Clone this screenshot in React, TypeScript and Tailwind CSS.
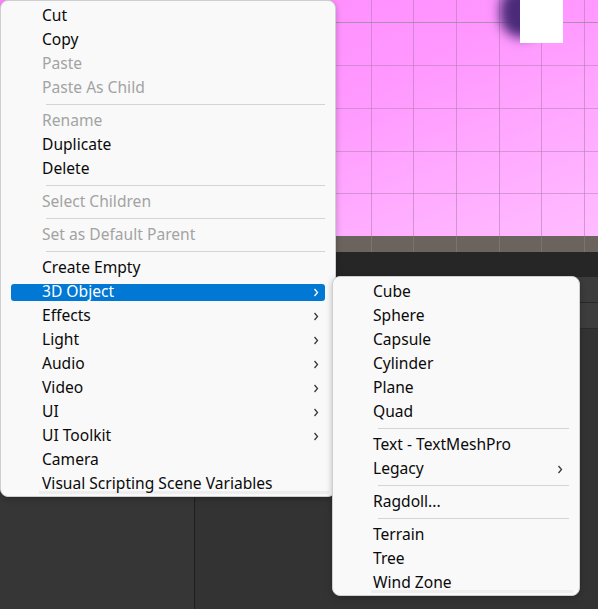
import React from "react";

type Item =
  | { sep: true }
  | { label: string; disabled?: boolean; sub?: boolean; active?: boolean; sep?: false };

const mainItems: Item[] = [
  { label: "Cut" },
  { label: "Copy" },
  { label: "Paste", disabled: true },
  { label: "Paste As Child", disabled: true },
  { sep: true },
  { label: "Rename", disabled: true },
  { label: "Duplicate" },
  { label: "Delete" },
  { sep: true },
  { label: "Select Children", disabled: true },
  { sep: true },
  { label: "Set as Default Parent", disabled: true },
  { sep: true },
  { label: "Create Empty" },
  { label: "3D Object", sub: true, active: true },
  { label: "Effects", sub: true },
  { label: "Light", sub: true },
  { label: "Audio", sub: true },
  { label: "Video", sub: true },
  { label: "UI", sub: true },
  { label: "UI Toolkit", sub: true },
  { label: "Camera" },
  { label: "Visual Scripting Scene Variables" },
];

const subItems: Item[] = [
  { label: "Cube" },
  { label: "Sphere" },
  { label: "Capsule" },
  { label: "Cylinder" },
  { label: "Plane" },
  { label: "Quad" },
  { sep: true },
  { label: "Text - TextMeshPro" },
  { label: "Legacy", sub: true },
  { sep: true },
  { label: "Ragdoll..." },
  { sep: true },
  { label: "Terrain" },
  { label: "Tree" },
  { label: "Wind Zone" },
];

function Chevron({ white }: { white?: boolean }) {
  return (
    <svg width="6" height="9" viewBox="0 0 6 9" className="ml-auto mr-[6px] shrink-0">
      <polyline
        points="1.5,1 4.5,4.5 1.5,8"
        fill="none"
        stroke={white ? "#ffffff" : "#3a3a3a"}
        strokeWidth="1.3"
      />
    </svg>
  );
}

function Menu({ items, textPad }: { items: Item[]; textPad: string }) {
  return (
    <div className="flex flex-col pt-[3px] pb-[2px]">
      {items.map((it, i) =>
        it.sep ? (
          <div key={i} className="h-[9px] pl-[45px] pr-[10px] pt-[4px]">
            <div className="h-px bg-[#d4d4d4]" />
          </div>
        ) : (
          <div key={i} className="h-[24px] px-[10px] flex items-center relative">
            {i === items.length - 1 && (
              <div className="absolute left-[38px] right-[6px] bottom-[2px] h-[3px] bg-[#eeeeee]" />
            )}
            <div
              className={
                "relative h-[17px] w-full rounded-[3px] flex items-center " +
                textPad +
                " " +
                (it.active ? "bg-[#0078d4] text-white" : it.disabled ? "text-[#a3a3a3]" : "text-[#0a0a0a]")
              }
            >
              <span className="leading-none whitespace-nowrap">{it.label}</span>
              {it.sub && <Chevron white={it.active} />}
            </div>
          </div>
        )
      )}
    </div>
  );
}

export default function App() {
  const vLines = [28, 71, 114, 157, 200, 243, 286, 328, 371, 413, 456, 499, 541, 584];
  const hLines = [22, 65, 108, 151, 193];
  return (
    <div
      className="relative w-[598px] h-[609px] overflow-hidden bg-[#333333] text-[15.6px]"
      style={{ fontFamily: '"Noto Sans", "Open Sans", sans-serif' }}
    >
      {/* scene view */}
      <div className="relative h-[236px] bg-gradient-to-br from-[#ff86ff] via-[#ff98ff] to-[#ffbcff] overflow-hidden">
        {vLines.map((x) => (
          <div key={x} className="absolute top-0 bottom-0 w-px bg-[#b47fb4]/60" style={{ left: x }} />
        ))}
        {hLines.map((y, i) => (
          <div
            key={y}
            className={"absolute left-0 right-0 h-px " + (i === 0 ? "bg-[#9c8a9c]/80" : "bg-[#b47fb4]/55")}
            style={{ top: y }}
          />
        ))}
        <div className="absolute left-[500px] -top-[14px] w-[44px] h-[52px] rounded-full bg-[#4b2a7a] blur-[6px]" />
        <div className="absolute left-[520px] top-0 w-[43px] h-[43px] bg-white" />
      </div>
      <div className="relative h-[16px] bg-[#6a635e]">
        {vLines.map((x) => (
          <div key={x} className="absolute top-0 bottom-0 w-px bg-[#7a736e]" style={{ left: x }} />
        ))}
      </div>
      <div className="h-[25px] bg-[#262626]" />
      <div className="flex h-[332px]">
        <div className="w-[195px] bg-[#363636] border-r border-[#1e1e1e]" />
        <div className="flex-1 flex flex-col bg-[#333333]">
          <div className="h-[26px] bg-[#3c3c3c] border-b border-[#282828]" />
          <div className="h-[26px] bg-[#3d3d3d] border-b border-[#2a2a2a]" />
        </div>
      </div>

      {/* context menu */}
      <div className="absolute left-0 top-0 w-[336px] h-[497px] bg-[#f9f9f9] border border-[#cfcfcf] rounded-[8px] shadow-[0_2px_6px_rgba(0,0,0,0.25)]">
        <Menu items={mainItems} textPad="pl-[31px]" />
      </div>

      {/* submenu */}
      <div className="absolute left-[332px] top-[276px] w-[248px] h-[320px] bg-[#f9f9f9] border border-[#cfcfcf] rounded-[8px] shadow-[0_2px_6px_rgba(0,0,0,0.25)]">
        <Menu items={subItems} textPad="pl-[30px]" />
      </div>
    </div>
  );
}
